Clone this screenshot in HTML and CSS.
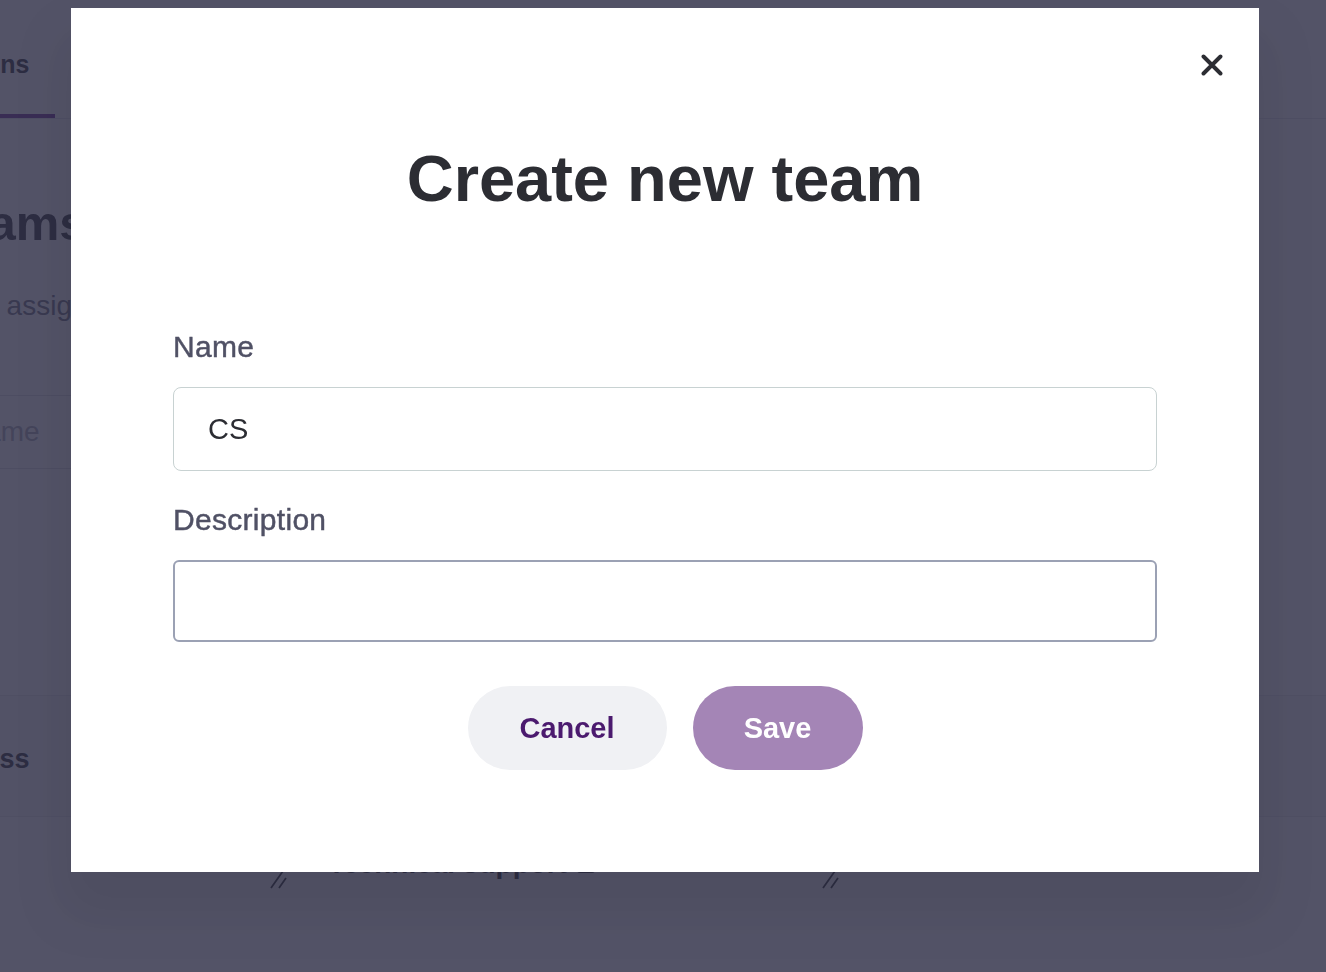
FILE: index.html
```html
<!DOCTYPE html>
<html lang="en">
<head>
    <meta charset="UTF-8">
    <meta name="viewport" content="width=device-width, initial-scale=1.0">
    <title>Teams - Create new team</title>
    <link rel="stylesheet" href="styles.css">
</head>
<body>
    <div class="page">
        <nav class="tabs">
            <span class="tab active">Options</span>
            <span class="tab">Members</span>
            <span class="tab">Roles</span>
        </nav>

        <h1 class="page-title">Teams</h1>
        <p class="page-sub">Then assign members to teams so work gets routed.</p>

        <div class="search">
            <input class="search-input" type="text" placeholder="Name">
        </div>

        <div class="team-table">
            <div class="table-head">
                <span class="head-cell">Access</span>
            </div>
            <div class="table-row">
                <span class="grip">
                    <svg width="26" height="22" viewBox="0 0 26 22"><path d="M2 21 L14 4 M10 21 L17 11" stroke="#2d2e33" stroke-width="1.8" fill="none"/></svg>
                </span>
                <span class="row-name">Technical support</span>
                <span class="row-icon"></span>
                <span class="grip grip-second">
                    <svg width="26" height="22" viewBox="0 0 26 22"><path d="M2 21 L14 4 M10 21 L17 11" stroke="#2d2e33" stroke-width="1.8" fill="none"/></svg>
                </span>
                <span class="row-count">9</span>
            </div>
        </div>
    </div>

    <div class="overlay">
        <div class="modal" role="dialog" aria-labelledby="modalTitle">
            <button class="close-btn" aria-label="Close">
                <svg width="22" height="22" viewBox="0 0 22 22"><path d="M2.5 2.5 L19.5 19.5 M19.5 2.5 L2.5 19.5" stroke="#2c2d33" stroke-width="3.9" stroke-linecap="round"/></svg>
            </button>

            <h2 id="modalTitle" class="modal-title">Create new team</h2>

            <form class="team-form" onsubmit="return false">
                <div class="field">
                    <label for="teamName">Name</label>
                    <input id="teamName" class="text-input" type="text" value="CS">
                </div>
                <div class="field field-gap">
                    <label for="teamDesc">Description</label>
                    <input id="teamDesc" class="text-input focused" type="text">
                </div>
                <div class="actions">
                    <button type="button" class="btn btn-cancel">Cancel</button>
                    <button type="submit" class="btn btn-save">Save</button>
                </div>
            </form>
        </div>
    </div>
</body>
</html>
```

FILE: styles.css
```css
body {
    margin: 0;
    font-family: "Liberation Sans", Arial, Helvetica, sans-serif;
    background-color: #ffffff;
    color: #2d2e33;
    overflow: hidden;
}

/* page behind the dialog */
.page {
    margin-left: -65px;
    width: 1400px;
    height: 972px;
}

.tabs {
    display: flex;
    gap: 40px;
    padding-top: 46px;
    border-bottom: 1px solid #e4e4ea;
}

.tab {
    font-size: 25px;
    font-weight: bold;
    line-height: 36px;
    padding-bottom: 32px;
    color: #2d2e33;
}

.tab.active {
    padding-right: 26px;
    border-bottom: 4px solid #6e2c97;
}

.page-title {
    margin: 74px 0 0;
    font-size: 49px;
    line-height: 60px;
    font-weight: bold;
}

.page-sub {
    margin: 36px 0 0;
    font-size: 28px;
    line-height: 34px;
    color: #6e6f80;
}

.search {
    margin-top: 72px;
    width: 600px;
}

.search-input {
    box-sizing: border-box;
    width: 100%;
    height: 74px;
    padding-left: 29px;
    font-family: inherit;
    font-size: 28px;
    border: 1px solid #dcdce2;
    border-radius: 6px;
    background-color: #ffffff;
}

.search-input::placeholder {
    color: #a9aab6;
}

.team-table {
    margin-top: 226px;
}

.table-head {
    height: 122px;
    display: flex;
    align-items: center;
    padding-top: 6px;
    box-sizing: border-box;
    background-color: #f6f6f8;
    border-top: 1px solid #e6e6ea;
    border-bottom: 1px solid #e6e6ea;
}

.head-cell {
    font-size: 27px;
    font-weight: bold;
}

.table-row {
    display: flex;
    align-items: flex-end;
    height: 72px;
}

.grip {
    margin-left: 334px;
    height: 22px;
}

.row-name {
    margin-left: 33px;
    font-size: 28px;
    line-height: 28px;
    margin-bottom: 11px;
    font-weight: bold;
}

.row-icon {
    width: 18px;
    height: 14px;
    margin: 0 0 16px 10px;
    border-radius: 3px;
    background-color: #2d2e33;
}

.grip-second {
    margin-left: 226px;
}

.row-count {
    margin: 0 0 14px 16px;
    font-size: 28px;
    line-height: 28px;
}

/* dialog */
.overlay {
    position: fixed;
    inset: 0;
    background-color: rgba(45, 45, 69, 0.82);
}

.modal {
    position: absolute;
    left: 71px;
    top: 8px;
    width: 1188px;
    height: 864px;
    box-sizing: border-box;
    padding: 0 102px;
    background-color: #ffffff;
    box-shadow: 0 34px 50px 12px rgba(0, 0, 0, 0.07);
}

.close-btn {
    position: absolute;
    top: 42px;
    right: 32px;
    width: 30px;
    height: 30px;
    padding: 4px;
    border: none;
    background: none;
    cursor: pointer;
}

.modal-title {
    margin: 132px 0 0;
    font-size: 65px;
    line-height: 77px;
    font-weight: bold;
    text-align: center;
    color: #2c2d33;
}

.team-form {
    margin-top: 112px;
}

.field label {
    display: block;
    font-size: 30px;
    line-height: 36px;
    margin-bottom: 22px;
    color: #505165;
    -webkit-text-stroke: 0.45px #505165;
    letter-spacing: 0.3px;
}

.field-gap {
    margin-top: 31px;
}

.text-input {
    display: block;
    box-sizing: border-box;
    width: 100%;
    height: 84px;
    padding: 0 34px;
    font-family: inherit;
    font-size: 29px;
    color: #2c2d33;
    background-color: #ffffff;
    border: 1px solid #c8d2d2;
    border-radius: 8px;
    outline: none;
}

.text-input.focused {
    height: 82px;
    border: 2px solid #9ba1b4;
    border-radius: 6px;
}

.actions {
    display: flex;
    justify-content: center;
    gap: 26px;
    margin-top: 44px;
}

.btn {
    height: 84px;
    border: none;
    border-radius: 42px;
    font-family: inherit;
    font-size: 29px;
    font-weight: bold;
    cursor: pointer;
}

.btn-cancel {
    width: 199px;
    background-color: #f0f1f4;
    color: #4b1a6e;
}

.btn-save {
    width: 170px;
    background-color: #a485b6;
    color: #ffffff;
}
```
